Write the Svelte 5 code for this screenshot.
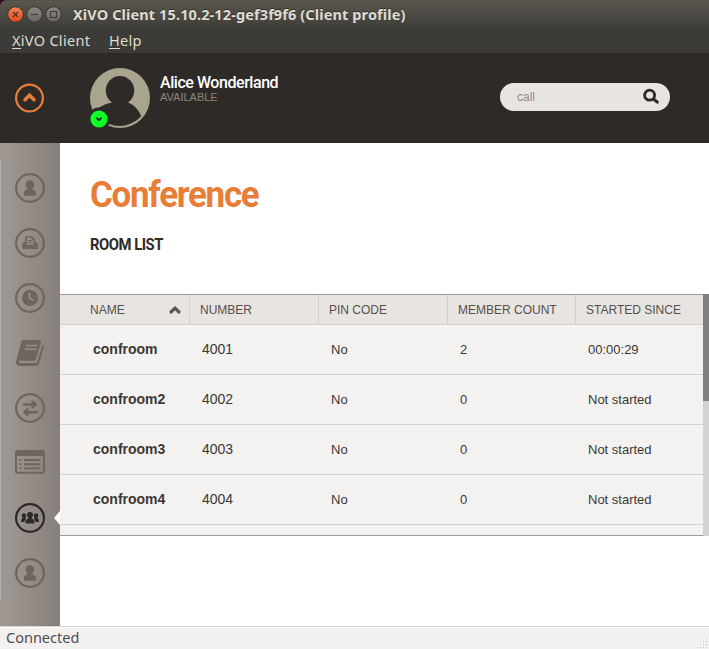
<script>
  const columns = ['NAME', 'NUMBER', 'PIN CODE', 'MEMBER COUNT', 'STARTED SINCE'];
  const rooms = [
    ['confroom', '4001', 'No', '2', '00:00:29'],
    ['confroom2', '4002', 'No', '0', 'Not started'],
    ['confroom3', '4003', 'No', '0', 'Not started'],
    ['confroom4', '4004', 'No', '0', 'Not started']
  ];
  const tabs = ['person', 'fax', 'history', 'directory', 'switch', 'list', 'conference', 'agent'];
  const ringless = ['directory', 'list'];
</script>

<div class="window">
  <div class="corner"></div>
  <header class="titlebar">
    <svg class="controls" width="56" height="18" viewBox="0 0 56 18">
      <defs>
        <linearGradient id="close" x2="0" y2="1"><stop stop-color="#f68056" /><stop offset="1" stop-color="#df4d1c" /></linearGradient>
        <linearGradient id="dim" x2="0" y2="1"><stop stop-color="#8b8981" /><stop offset="1" stop-color="#65635c" /></linearGradient>
      </defs>
      <circle cx="9.5" cy="9.5" r="7.8" fill="url(#close)" stroke="#34322d" />
      <path d="M7 7l5 5m0-5l-5 5" stroke="#55301f" stroke-width="1.3" />
      <circle cx="28.5" cy="9.5" r="7.8" fill="url(#dim)" stroke="#34322d" />
      <path d="M25 9.5h7" stroke="#3b3a35" />
      <circle cx="47.5" cy="9.5" r="7.8" fill="url(#dim)" stroke="#34322d" />
      <rect x="44.5" y="6.5" width="6" height="6" fill="none" stroke="#3b3a35" />
    </svg>
    <span class="title">XiVO Client 15.10.2-12-gef3f9f6 (Client profile)</span>
  </header>
  <nav class="menubar">
    <span class="m1"><i>X</i>iVO Client</span><span class="m2"><i>H</i>elp</span>
  </nav>

  <section class="identity">
    <svg class="collapse" width="30" height="30" viewBox="0 0 30 30">
      <circle cx="14.5" cy="15" r="13.4" fill="none" stroke="#e87d38" stroke-width="2.2" />
      <path d="M10 16.7L14.5 12.2L19 16.7" fill="none" stroke="#e87d38" stroke-width="3.6" stroke-linecap="round" />
    </svg>
    <svg class="avatar" width="60" height="60" viewBox="0 0 60 60">
      <clipPath id="bust"><circle cx="29.5" cy="29.5" r="28.5" /></clipPath>
      <circle cx="30" cy="30" r="30" fill="#a9a48d" />
      <g fill="#2e2a27">
        <ellipse cx="30" cy="22.5" rx="14.2" ry="14.5" />
        <path clip-path="url(#bust)" d="M23 33c0 2-4 2-8 3.5L4 42v20h45l2.5-13C49 42 44.500 37.500 40 35.500 38 34.500 37 34 37 33z" />
        <circle cx="9" cy="51" r="11.5" />
      </g>
      <circle cx="9" cy="51" r="8.6" fill="#0cff26" />
      <path d="M6.8 50.2L9 52L11.2 50.2" fill="none" stroke="#2e2a27" stroke-width="1.8" stroke-linecap="round" />
    </svg>
    <div class="who">
      <div class="name">Alice Wonderland</div>
      <div class="presence">AVAILABLE</div>
    </div>
    <div class="search">
      <span>call</span>
      <svg width="18" height="18" viewBox="0 0 18 18">
        <circle cx="7.6" cy="7.2" r="5" fill="none" stroke="#2e2a27" stroke-width="2.8" />
        <path d="M11.5 11l3.8 3.2" stroke="#2e2a27" stroke-width="3" stroke-linecap="round" />
      </svg>
    </div>
  </section>

  <main>
    <aside>
      {#each tabs as tab}
        <svg class="tab {tab}" width="30" height="30" viewBox="0 0 30 30">
          {#if !ringless.includes(tab)}
            <circle cx="15" cy="15" r="13.9" fill="none" stroke="currentColor" stroke-width="2.2" />
          {/if}
          {#if tab === 'person' || tab === 'agent'}
            <path fill="currentColor" d="M15 7.2c-2.900 0-4.300 1.800-4.300 4.200 0 1.900.9 3.300 2 4.100-.1.800-1 1.200-2.100 1.800-1.300.8-1.800 1.700-1.800 4.100 0 .9.400 1.300 1.200 1.300h10c.8 0 1.200-.4 1.200-1.300 0-2.400-.5-3.300-1.800-4.100-1.100-.6-2-1-2.100-1.800 1.100-.8 2-2.200 2-4.100 0-2.400-1.400-4.200-4.300-4.200z" />
          {:else if tab === 'fax'}
            <path fill="currentColor" d="M8.5 14H10V9.5Q10.2 8 11.8 8H17l3 3v3h1.5l1.5 2.4v3.2q0 1.500-1.500 1.500h-13Q7 21 7 19.600v-3.200z" />
            <path fill="#97918b" d="M11.8 9.5h4.600v2.200h2v4.800h-6.600z" />
            <path d="M12.8 12.5h4.700m-4.700 2h4.700" stroke="currentColor" stroke-width="1" />
          {:else if tab === 'history'}
            <circle cx="15" cy="15" r="8" fill="currentColor" />
            <path d="M14.5 9.5v5.800l4 2" fill="none" stroke="#99938d" stroke-width="1.7" />
          {:else if tab === 'directory'}
            <path fill="currentColor" d="M8.6 2h16q2 0 1.400 2l-5.200 17.200q-.5 1.600-2.400 1.600H4.500c-1 0-1 2.200.3 2.200H20c1.400 0 2-.6 2.400-1.800l5.300-16.500c1.100.5 1.400 1.400 1.100 2.500L24 25.300c-.6 1.800-1.600 2.700-3.600 2.700H5c-3 0-4.600-2.300-3.800-5L6 4.500C6.500 2.800 7.200 2 8.600 2z" />
            <path d="M11 7.500h11.500m-12.500 3.700h11.500" stroke="#97918b" stroke-width="1.5" />
          {:else if tab === 'switch'}
            <path d="M9 11.500h11M22 19.200H11" stroke="currentColor" stroke-width="2.4" stroke-linecap="round" />
            <path d="M17.500 8.700l3.200 2.800-3.200 2.800M12.500 16.400l-3.200 2.800 3.200 2.800" stroke="currentColor" stroke-width="2.4" fill="none" stroke-linecap="round" stroke-linejoin="round" />
          {:else if tab === 'list'}
            <path fill="currentColor" fill-rule="evenodd" d="M2.500 2h25Q30 2 30 4.500v18.700q0 2.500-2.500 2.500h-25Q0 25.700 0 23.200V4.500Q0 2 2.500 2zM2 8v14.200q0 1.500 1.500 1.500h23q1.500 0 1.500-1.500V8z" />
            <path d="M9 12h16.500m-16.500 4.200h16.500m-16.500 4.200h16.500M4.300 12h2m-2 4.200h2m-2 4.200h2" stroke="currentColor" stroke-width="1.9" />
          {:else}
            <path fill="currentColor" d="M15 8.900c-2 0-3 1.200-3 2.900 0 1.300.5 2.200 1.300 2.900 0 .9-.6 1.200-1.400 1.600-1.100.5-1.400 1.300-1.400 3 0 .9.300 1.200 1 1.200h7c.7 0 1-.3 1-1.200 0-1.700-.3-2.500-1.400-3-.8-.4-1.400-.7-1.400-1.600.8-.7 1.300-1.600 1.300-2.900 0-1.700-1-2.900-3-2.900z" />
            <path fill="currentColor" d="M8.900 10.300c-1.400 0-2.100.9-2.100 2.300 0 1 .4 1.700.9 2.200-.1 1.100-1.700 1-1.700 3.300 0 .6.200.9.800.9h2.700c.1-1.400.7-2.300 1.900-2.900-.7-.3-1-.6-1-1.300.5-.5.800-1.200.8-2.200-.1-1.400-.9-2.300-2.300-2.300zM21.100 10.300c1.400 0 2.100.9 2.100 2.300 0 1-.4 1.700-.9 2.200.1 1.100 1.700 1 1.700 3.300 0 .6-.2.900-.8.900h-2.700c-.1-1.400-.7-2.300-1.900-2.900.7-.3 1-.6 1-1.300-.5-.5-.8-1.200-.8-2.200.1-1.400.9-2.300 2.300-2.300z" />
          {/if}
        </svg>
      {/each}
      <div class="pointer"></div>
    </aside>

    <div class="content">
      <h1>Conference</h1>
      <h2>ROOM LIST</h2>
      <div class="listing">
        <div class="table">
          <div class="row head">
            {#each columns as column, i}
              <div>
                {column}
                {#if i === 0}
                  <svg width="14" height="10" viewBox="0 0 14 10"><path d="M3 7L7 3.200L11 7" fill="none" stroke="#5d5751" stroke-width="3.2" stroke-linecap="round" /></svg>
                {/if}
              </div>
            {/each}
          </div>
          {#each rooms as room}
            <div class="row">
              {#each room as cell}<div>{cell}</div>{/each}
            </div>
          {/each}
        </div>
        <div class="scroll"><div></div></div>
      </div>
    </div>
  </main>

  <footer>
    <span>Connected</span>
    <svg width="12" height="12" viewBox="0 0 12 12" fill="#cbc8c4">
      <path d="M10 1h1v1h-1zM10 4h1v1h-1zM7 4h1v1H7zM10 7h1v1h-1zM7 7h1v1H7zM4 7h1v1H4zM10 10h1v1h-1zM7 10h1v1H7zM4 10h1v1H4zM1 10h1v1H1z" />
    </svg>
  </footer>
</div>

<style>
  :global(body) { margin: 0; background: #fff; }
  .window {
    position: relative;
    width: 709px;
    height: 649px;
    overflow: hidden;
    display: flex;
    flex-direction: column;
    font-family: "Liberation Sans", Arial, sans-serif;
    white-space: nowrap;
  }
  .corner {
    position: absolute;
    width: 6px;
    height: 6px;
    background: radial-gradient(circle at 6px 6px, transparent 5.5px, #2c0a22 6px);
  }
  .titlebar {
    box-sizing: border-box;
    height: 28px;
    padding-left: 6px;
    display: flex;
    background: linear-gradient(#494740 0, #5b5850 1px, #57544c 3px, #3f3e39 28px);
  }
  .controls { margin-top: 5px; flex: none; }
  .title {
    margin-left: 11px;
    font: bold 14.5px/29px "Noto Sans", sans-serif;
    letter-spacing: 0.12px;
    color: #dfdbd2;
    text-shadow: 0 -1px #33312c;
  }
  .menubar {
    height: 25px;
    background: #3c3b37;
    display: flex;
    font: 14.5px/25px "Noto Sans", sans-serif;
    letter-spacing: 0.3px;
    color: #dfdbd2;
  }
  .menubar i {
    font-style: normal;
    display: inline-block;
    height: 20px;
    border-bottom: 1px solid #dfdbd2;
  }
  .m1 { margin-left: 12px; width: 97px; }
  .identity {
    height: 90px;
    background: #2e2a27;
    display: flex;
    align-items: flex-start;
  }
  .collapse { margin: 30px 0 0 15px; }
  .avatar { margin: 15px 0 0 45px; }
  .who { margin: 20px 0 0 10px; width: 340px; }
  .name { font: 500 16px/19px Roboto, sans-serif; letter-spacing: -0.45px; color: #fff; }
  .presence { font-size: 11px; line-height: 11px; color: #8e857c; }
  .search {
    width: 170px;
    height: 28px;
    box-sizing: border-box;
    margin-top: 30px;
    padding: 0 10px 0 17px;
    border-radius: 14px;
    background: #e8e4e1;
    color: #918c87;
    font-size: 12px;
    display: flex;
    align-items: center;
    justify-content: space-between;
  }
  main { height: 483px; display: flex; }
  aside {
    position: relative;
    width: 60px;
    box-sizing: border-box;
    padding: 30px 0 0 15px;
    background:
      linear-gradient(#b4b2ae, #b4b2ae) 0 17px / 1px 440px no-repeat,
      linear-gradient(90deg, #a09a94, #87807a);
    color: #6c6660;
    display: flex;
    flex-direction: column;
    gap: 25px;
  }
  .tab { flex: none; display: block; }
  .conference { color: #2e2a27; }
  .pointer {
    position: absolute;
    right: 0;
    top: 368px;
    border: 7px solid transparent;
    border-left: 0;
    border-right: 6px solid #fff;
  }
  .content { flex: 1; background: #fff; }
  h1 {
    margin: 31px 0 0 30px;
    font: 700 36px/42px Roboto, sans-serif;
    letter-spacing: -1.3px;
    color: #e87d38;
    transform: scaleX(0.97);
    transform-origin: left;
  }
  h2 {
    margin: 18px 0 0 30px;
    height: 60px;
    font: 700 16px/21px Roboto, sans-serif;
    letter-spacing: -0.5px;
    color: #2e2a27;
    transform: scaleX(0.925);
    transform-origin: left;
  }
  .listing { display: flex; height: 242px; }
  .table {
    flex: 1;
    box-sizing: border-box;
    overflow: hidden;
    border-top: 1px solid #a19b97;
    border-bottom: 1px solid #a19b97;
    background: #f4f2f1;
  }
  .row {
    display: grid;
    grid-template-columns: 130px 129px 129px 128px 127px;
    height: 49px;
    line-height: 50px;
    border-bottom: 1px solid #d4d0cd;
    font-size: 13px;
    color: #3b3835;
  }
  .row > div { padding-left: 12px; }
  .row > div:first-child { padding-left: 33px; font-weight: bold; font-size: 14px; }
  .row > div:nth-child(2) { font-size: 14px; }
  .row:not(.head) > div:nth-child(-n + 2) { line-height: 48px; }
  .row.head { height: 29px; line-height: 30px; background: #e8e4e1; font-size: 12px; color: #55504b; }
  .row.head > div {
    box-sizing: border-box;
    padding-left: 10px;
    border-right: 1px solid #d4cfcc;
    font-size: 12px;
    font-weight: normal;
  }
  .row.head > div:last-child { border: 0; }
  .row.head > div:first-child {
    padding: 0 7px 0 30px;
    display: flex;
    align-items: center;
    justify-content: space-between;
  }
  .scroll { width: 6px; background: #d2d2d2; }
  .scroll div { height: 107px; background: #808080; }
  footer {
    box-sizing: border-box;
    height: 23px;
    border-top: 1px solid #d5d2cf;
    box-shadow: inset 0 1px #fff;
    background: #f2f1f0;
    padding: 0 1px 0 6px;
    display: flex;
    justify-content: space-between;
    align-items: flex-end;
    font: 14.5px/22px "Noto Sans", sans-serif;
    color: #4c4c4c;
  }
  footer span { padding-bottom: 1px; }
</style>
